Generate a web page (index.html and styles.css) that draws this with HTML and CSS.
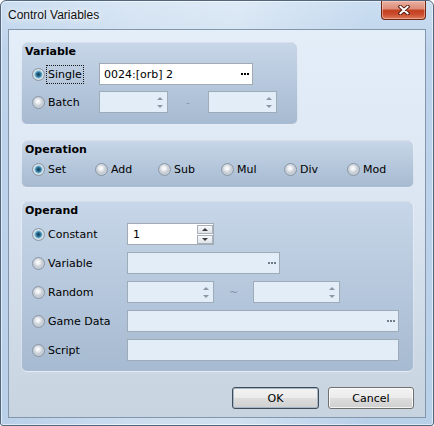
FILE: index.html
```html
<!DOCTYPE html>
<html lang="en">
<head>
<meta charset="utf-8">
<title>Control Variables</title>
<link rel="stylesheet" href="styles.css">
</head>
<body>
<div class="window">
  <div class="titlebar">
    <span class="title">Control Variables</span>
    <button class="close" type="button" aria-label="Close">
      <svg width="12" height="10" viewBox="0 0 12 10">
        <path d="M2.2 1.6 L9.8 8.4 M9.8 1.6 L2.2 8.4" stroke="#4a140a" stroke-width="3.8" stroke-linecap="round"/>
        <path d="M2.2 1.6 L9.8 8.4 M9.8 1.6 L2.2 8.4" stroke="#ffffff" stroke-width="2" stroke-linecap="round"/>
      </svg>
    </button>
  </div>

  <div class="client">
    <section class="group group-variable">
      <h3 class="group-title">Variable</h3>
      <div class="rows">
        <div class="row">
          <label class="option option-short"><input type="radio" name="target" checked><span class="focused">Single</span></label>
          <div class="field w154"><span>0024:[orb] 2</span><span class="dots"></span></div>
        </div>
        <div class="row">
          <label class="option option-short"><input type="radio" name="target"><span>Batch</span></label>
          <div class="spin disabled w69"><span class="arrows"><i class="up"></i><i class="down"></i></span></div>
          <span class="range-sep w40">-</span>
          <div class="spin disabled w69"><span class="arrows"><i class="up"></i><i class="down"></i></span></div>
        </div>
      </div>
    </section>

    <section class="group group-operation">
      <h3 class="group-title">Operation</h3>
      <div class="ops">
        <label class="option"><input type="radio" name="op" checked><span>Set</span></label>
        <label class="option"><input type="radio" name="op"><span>Add</span></label>
        <label class="option"><input type="radio" name="op"><span>Sub</span></label>
        <label class="option"><input type="radio" name="op"><span>Mul</span></label>
        <label class="option"><input type="radio" name="op"><span>Div</span></label>
        <label class="option"><input type="radio" name="op"><span>Mod</span></label>
      </div>
    </section>

    <section class="group group-operand">
      <h3 class="group-title">Operand</h3>
      <div class="rows rows-operand">
        <div class="row">
          <label class="option option-long"><input type="radio" name="src" checked><span>Constant</span></label>
          <div class="spin w87">
            <span class="spin-value">1</span>
            <span class="spin-buttons">
              <span class="spin-btn"><i class="up"></i></span>
              <span class="spin-btn"><i class="down"></i></span>
            </span>
          </div>
        </div>
        <div class="row">
          <label class="option option-long"><input type="radio" name="src"><span>Variable</span></label>
          <div class="field disabled w153"><span></span><span class="dots"></span></div>
        </div>
        <div class="row">
          <label class="option option-long"><input type="radio" name="src"><span>Random</span></label>
          <div class="spin disabled w87"><span class="arrows"><i class="up"></i><i class="down"></i></span></div>
          <span class="range-sep w39">~</span>
          <div class="spin disabled w87"><span class="arrows"><i class="up"></i><i class="down"></i></span></div>
        </div>
        <div class="row">
          <label class="option option-long"><input type="radio" name="src"><span>Game Data</span></label>
          <div class="field disabled w272"><span></span><span class="dots"></span></div>
        </div>
        <div class="row">
          <label class="option option-long"><input type="radio" name="src"><span>Script</span></label>
          <div class="field disabled w272"></div>
        </div>
      </div>
    </section>

    <div class="actions">
      <button class="btn btn-default" type="button">OK</button>
      <button class="btn" type="button">Cancel</button>
    </div>
  </div>
</div>
</body>
</html>
```

FILE: styles.css
```css
* { box-sizing: border-box; }

html, body { margin: 0; padding: 0; }

body {
  width: 434px;
  height: 426px;
  overflow: hidden;
  font-family: "DejaVu Sans", Verdana, sans-serif;
  font-size: 11px;
  color: #000;
  background: #ffffff;
}

/* ---- window frame ---- */
.window {
  width: 434px;
  height: 426px;
  display: flex;
  flex-direction: column;
  border: 1px solid #52667d;
  border-radius: 6px 6px 3px 3px;
  overflow: hidden;
  background:
    linear-gradient(90deg, rgba(255,255,255,0) 0%, rgba(255,255,255,.28) 30%, rgba(255,255,255,.35) 55%, rgba(255,255,255,0) 85%),
    linear-gradient(#cbdef1, #bdd3eb 12%, #b9d0e9 100%);
  box-shadow: inset 0 0 0 1px rgba(255,255,255,.55);
}

.titlebar {
  height: 28px;
  flex: none;
  display: flex;
  align-items: flex-start;
  padding: 0 7px;
}

.title {
  margin-top: 7px;
  font-family: "Liberation Sans", Arial, sans-serif;
  font-size: 12px;
  line-height: 14px;
  color: #111;
  text-shadow: 0 0 5px #fff, 0 0 9px rgba(255,255,255,.9);
}

.close {
  margin-left: auto;
  margin-top: -1px;
  width: 45px;
  height: 20px;
  padding: 0;
  display: flex;
  align-items: center;
  justify-content: center;
  border: 1px solid #6e2618;
  border-top-color: #8d3d2c;
  border-radius: 0 0 4px 4px;
  background: linear-gradient(#eab0a2 0%, #dc8a76 45%, #c3411f 50%, #c84a2b 72%, #df7b5b 100%);
  box-shadow: inset 0 0 0 1px rgba(255,220,210,.45);
}

/* ---- client area ---- */
.client {
  flex: 1;
  margin: 0 7px 7px;
  border: 1px solid #8396ab;
  background: linear-gradient(#e4eef9 0%, #dce7f3 40%, #c7d3df 100%);
  padding: 12px 11px 0 12px;
  display: flex;
  flex-direction: column;
}

.group {
  border: 1px solid rgba(255,255,255,.55);
  border-radius: 6px;
  padding: 2px 3px 0;
  background: linear-gradient(#c7d6e8, #a6bad1);
}

.group-variable { width: 277px; height: 83px; }
.group-operation { margin-top: 15px; height: 48px; }
.group-operand { margin-top: 13px; height: 171px; }

.group-title {
  margin: 0;
  font-size: 11px;
  font-weight: bold;
  line-height: 13px;
}

.rows {
  display: flex;
  flex-direction: column;
  gap: 6px;
  margin-top: 5px;
}

.rows-operand { gap: 7px; margin-top: 6px; }

.row {
  display: flex;
  align-items: center;
  height: 22px;
}

.ops {
  display: grid;
  grid-template-columns: repeat(6, 63px);
  margin-top: 4px;
  height: 15px;
  align-items: center;
}

/* ---- radio options ---- */
.option {
  display: flex;
  align-items: center;
  padding-left: 7px;
  flex: none;
  line-height: 13px;
}

.option-short { width: 74px; }
.option-long { width: 102px; }

.option span {
  padding: 2px 1px;
  border: 1px solid transparent;
}

.option span.focused { border: 1px dotted #1a1a1a; }

.option input[type="radio"] {
  -webkit-appearance: none;
  appearance: none;
  width: 13px;
  height: 13px;
  margin: 0 1px 0 0;
  flex: none;
  border-radius: 50%;
  border: 1px solid #8a97a5;
  background: radial-gradient(circle closest-side at 45% 40%, #ffffff 0%, #eef0f3 45%, #c6cdd5 100%);
}

.option input[type="radio"]:checked {
  background: radial-gradient(circle closest-side at 50% 50%, #153b54 0, #2a6a8e 2px, #6eb3d2 3.4px, #e8eef2 4.6px, #eceff2 70%, #c6cdd5 100%);
}

/* ---- fields ---- */
.field {
  display: flex;
  align-items: center;
  height: 22px;
  padding: 0 3px 0 4px;
  border: 1px solid #a2aab3;
  background: #ffffff;
}

.field.disabled {
  background: #e3edf8;
  border-color: #9eabb9;
}

.dots {
  margin-left: auto;
  width: 8px;
  height: 2px;
  background: repeating-linear-gradient(90deg, #000 0 2px, transparent 2px 3px);
}

.disabled .dots {
  background: repeating-linear-gradient(90deg, #6f7c8a 0 2px, transparent 2px 3px);
}

.w69 { width: 69px; }
.w87 { width: 87px; }
.w153 { width: 153px; }
.w154 { width: 154px; }
.w272 { width: 272px; }

.spin {
  display: flex;
  align-items: center;
  height: 22px;
  border: 1px solid #a2aab3;
  background: #ffffff;
}

.spin.disabled {
  background: #e3edf8;
  border-color: #9eabb9;
  justify-content: flex-end;
}

.spin-value { padding-left: 5px; }

.arrows {
  display: flex;
  flex-direction: column;
  align-items: center;
  gap: 5px;
  padding-right: 4px;
}

.arrows i, .spin-btn i {
  display: block;
  width: 0;
  height: 0;
  border-left: 3px solid transparent;
  border-right: 3px solid transparent;
}

.arrows i.up { border-bottom: 3px solid #8b97a4; }
.arrows i.down { border-top: 3px solid #8b97a4; }

.spin-buttons {
  margin-left: auto;
  display: flex;
  flex-direction: column;
  gap: 1px;
  align-self: stretch;
  justify-content: center;
}

.spin-btn {
  width: 16px;
  height: 9px;
  display: flex;
  align-items: center;
  justify-content: center;
  border: 1px solid #a9b1ba;
  background: linear-gradient(#f8f9fa, #dfe4e9);
}

.spin-btn i.up { border-bottom: 3px solid #3b3b3b; }
.spin-btn i.down { border-top: 3px solid #3b3b3b; }

.range-sep {
  text-align: center;
  color: #8797a8;
}

.w39 { width: 39px; }
.w40 { width: 40px; }

/* ---- dialog buttons ---- */
.actions {
  margin-top: 15px;
  display: flex;
  justify-content: flex-end;
  gap: 9px;
}

.btn {
  width: 86px;
  height: 22px;
  padding: 0;
  font-family: "DejaVu Sans", Verdana, sans-serif;
  font-size: 11px;
  color: #000;
  border: 1px solid #707070;
  border-radius: 3px;
  background: linear-gradient(#f3f3f3 0%, #ebebeb 48%, #dddddd 52%, #cfcfcf 100%);
  box-shadow: inset 0 0 0 1px rgba(255,255,255,.75);
}

.btn-default {
  width: 87px;
  border-color: #3e4b58;
  box-shadow: inset 0 0 0 1px #a5b6c6;
}
```
